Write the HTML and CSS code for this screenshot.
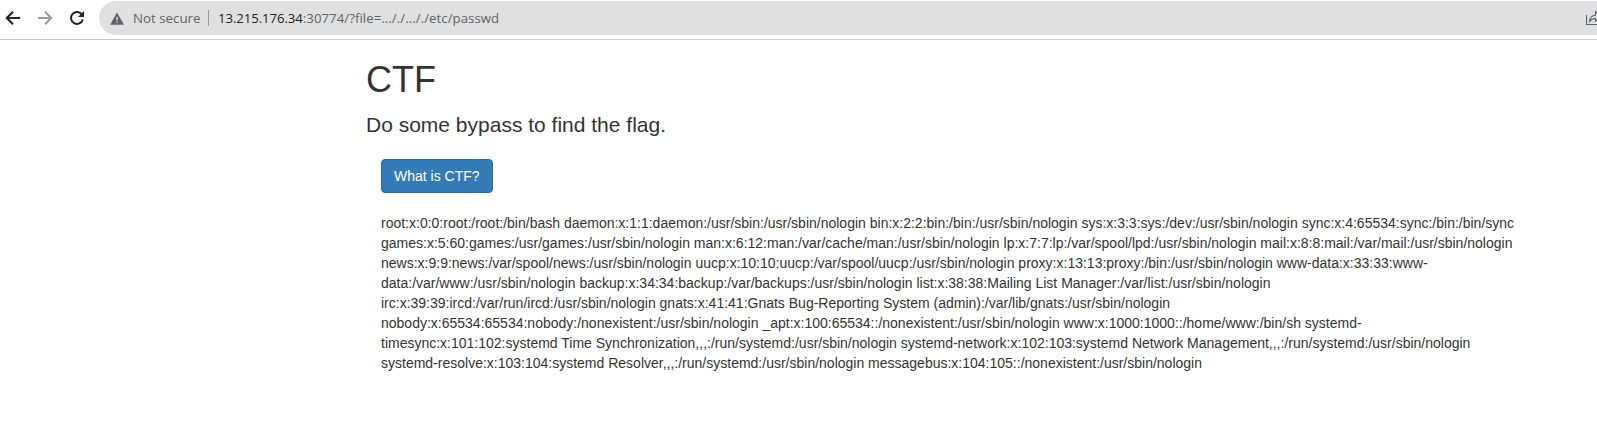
FILE: index.html
```html
<!DOCTYPE html>
<html lang="en">
<head>
<meta charset="utf-8">
<title>CTF</title>
<link rel="stylesheet" href="styles.css">
</head>
<body>
<header class="toolbar">
  <svg class="nav" viewBox="0 0 16 16"><path d="M15 8H2.500M8 1.700L1.700 8L8 14.300"/></svg>
  <svg class="nav muted" viewBox="0 0 16 16"><path d="M1 8h12.500M8 1.700L14.300 8L8 14.300"/></svg>
  <svg class="nav" viewBox="0 0 16 16"><path d="M13 4.600A6 6 0 1 0 13.800 9.500"/><path class="solid" d="M15 1v6H9z"/></svg>
  <div class="address">
    <svg class="warn" viewBox="0 0 16 14"><path d="M8 0L16 14H0z"/><path class="mark" d="M7.200 5h1.600v4H7.200zM7.200 10.300h1.600v1.600H7.200z"/></svg>
    <span class="status">Not secure</span>
    <span class="divider"></span>
    <span class="url"><b>13.215.176.34</b><span class="path">:30774/?file=..././..././etc/passwd</span></span>
    <svg class="share" viewBox="0 0 16 16"><path d="M.5 5V14.500H13.500V12M3.500 11.500C4 7.500 6 5.500 9.500 5.300V1.500L14.500 6.500L9.500 11V8.500C7 8.500 5 9.500 3.500 11.500z"/></svg>
  </div>
</header>
<main class="page">
  <h1>CTF</h1>
  <p class="lead">Do some bypass to find the flag.</p>
  <div class="content">
    <button class="btn">What is CTF?</button>
    <p class="output">root:x:0:0:root:/root:/bin/bash daemon:x:1:1:daemon:/usr/sbin:/usr/sbin/nologin bin:x:2:2:bin:/bin:/usr/sbin/nologin sys:x:3:3:sys:/dev:/usr/sbin/nologin sync:x:4:65534:sync:/bin:/bin/sync<br>games:x:5:60:games:/usr/games:/usr/sbin/nologin man:x:6:12:man:/var/cache/man:/usr/sbin/nologin lp:x:7:7:lp:/var/spool/lpd:/usr/sbin/nologin mail:x:8:8:mail:/var/mail:/usr/sbin/nologin<br>news:x:9:9:news:/var/spool/news:/usr/sbin/nologin uucp:x:10:10:uucp:/var/spool/uucp:/usr/sbin/nologin proxy:x:13:13:proxy:/bin:/usr/sbin/nologin www-data:x:33:33:www-<br>data:/var/www:/usr/sbin/nologin backup:x:34:34:backup:/var/backups:/usr/sbin/nologin list:x:38:38:Mailing List Manager:/var/list:/usr/sbin/nologin<br>irc:x:39:39:ircd:/var/run/ircd:/usr/sbin/nologin gnats:x:41:41:Gnats Bug-Reporting System (admin):/var/lib/gnats:/usr/sbin/nologin<br>nobody:x:65534:65534:nobody:/nonexistent:/usr/sbin/nologin _apt:x:100:65534::/nonexistent:/usr/sbin/nologin www:x:1000:1000::/home/www:/bin/sh systemd-<br>timesync:x:101:102:systemd Time Synchronization,,,:/run/systemd:/usr/sbin/nologin systemd-network:x:102:103:systemd Network Management,,,:/run/systemd:/usr/sbin/nologin<br>systemd-resolve:x:103:104:systemd Resolver,,,:/run/systemd:/usr/sbin/nologin messagebus:x:104:105::/nonexistent:/usr/sbin/nologin</p>
  </div>
</main>
</body>
</html>
```
FILE: styles.css
```css
* { box-sizing: border-box; }
body { margin: 0; background: #fff; color: #333; font: 14px/20px "Liberation Sans", Arial, sans-serif; overflow: hidden; }
.toolbar { display: flex; align-items: center; height: 40px; padding: 0 0 3px 5px; border-bottom: 1px solid #c8c8c8; }
.nav { width: 16px; height: 16px; margin-right: 16px; flex: none; fill: none; stroke: #202124; stroke-width: 2; }
.nav + .nav + .nav { margin-right: 14px; }
.nav.muted { stroke: #9b9c9e; }
.nav .solid { fill: #202124; stroke: none; }
.address { display: flex; align-items: center; flex: 1; height: 34px; padding-left: 11px; border-radius: 17px 0 0 17px; background: #e0e0e0; color: #5f6368; font: 13.3px/20px "Open Sans", sans-serif; white-space: nowrap; overflow: hidden; }
.warn { width: 14px; height: 13px; flex: none; fill: #5f6368; }
.warn .mark { fill: #e0e0e0; }
.status { width: 67px; margin-left: 9px; }
.divider { width: 1px; height: 16px; margin: 0 9px 0 8px; background: #9a9a9a; }
.url { font-size: 13.2px; }
.url b { color: #202124; font-weight: 400; letter-spacing: -0.08px; }
.path { letter-spacing: 0.06px; }
.share { width: 16px; height: 16px; margin: 0 -5px 0 auto; flex: none; fill: none; stroke: #5f6368; stroke-width: 1.1; }
.page { padding: 20px 0 0 366px; }
h1 { margin: 0 0 11px; font-size: 36px; line-height: 39px; font-weight: 500; }
.lead { margin: 0 0 20px; font-size: 21px; line-height: 29px; }
.content { padding-left: 15px; }
.btn { display: block; height: 34px; padding: 0 12px; border: 1px solid #2e6da4; border-radius: 4px; background: #337ab7; color: #fff; font: 14px/20px "Liberation Sans", Arial, sans-serif; }
.output { margin: 20px 0 0; white-space: nowrap; }
```
